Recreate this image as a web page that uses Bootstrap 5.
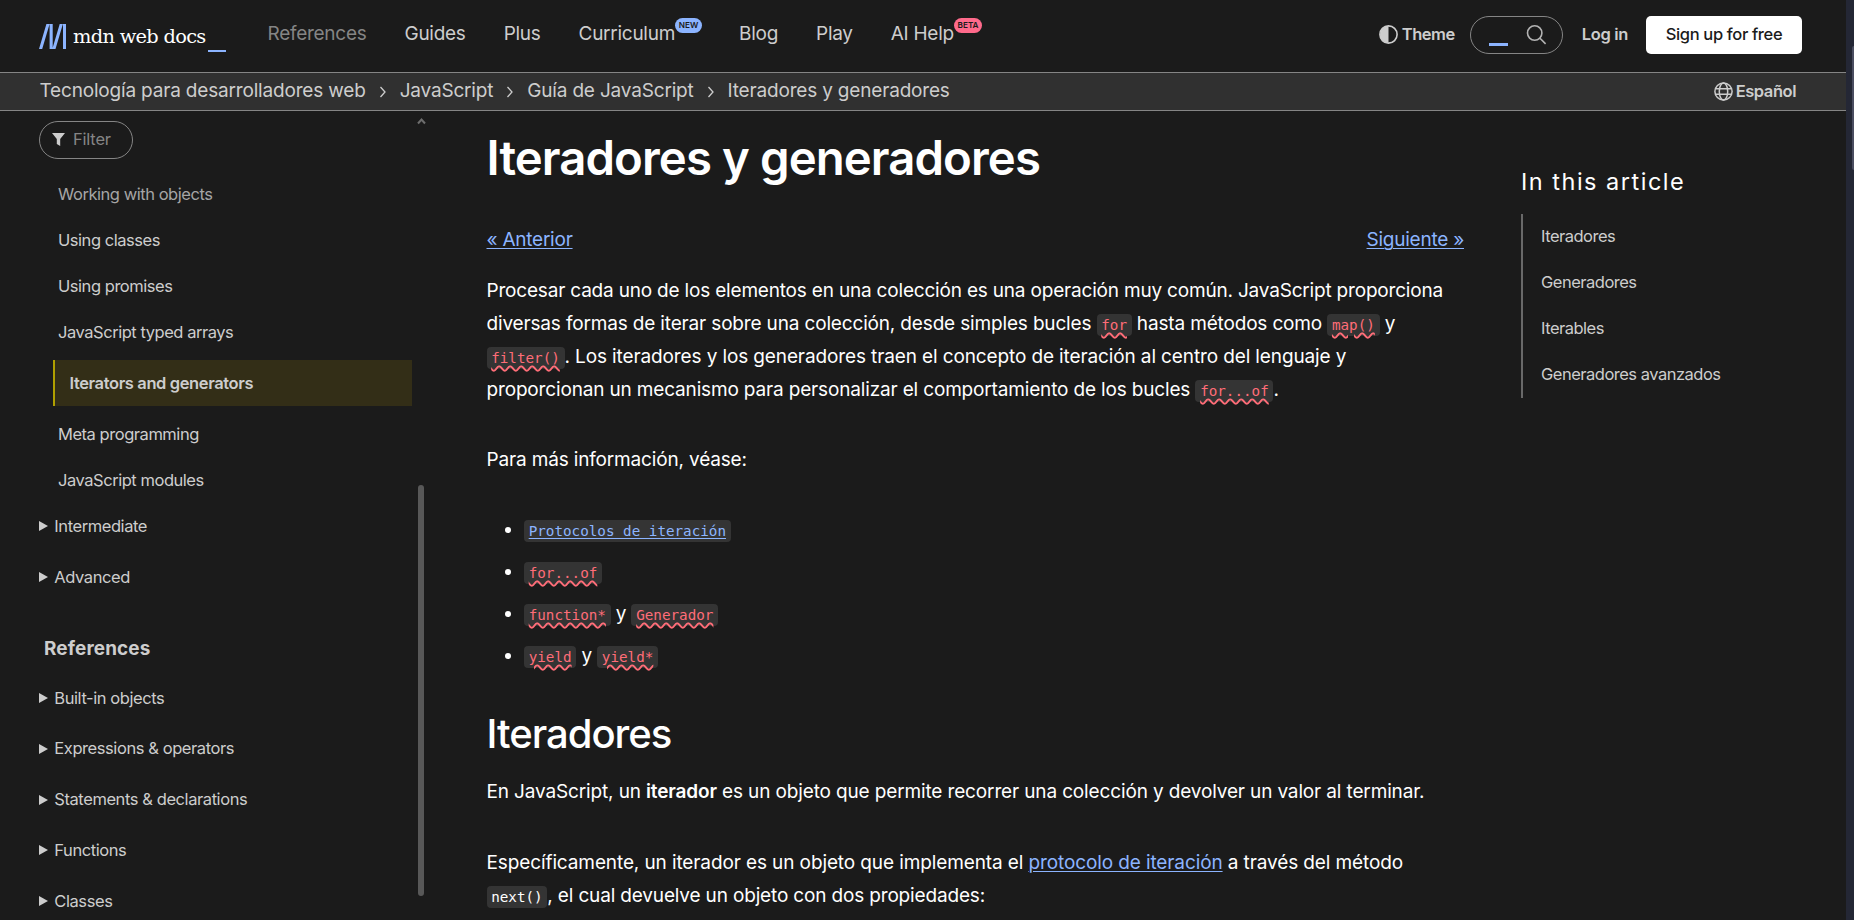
<!DOCTYPE html>
<html lang="es">
<head>
<meta charset="utf-8">
<title>Iteradores y generadores</title>
<link rel="stylesheet" href="https://cdn.jsdelivr.net/npm/bootstrap@5.3.0/dist/css/bootstrap.min.css">
<script src="https://cdn.jsdelivr.net/npm/bootstrap@5.3.0/dist/js/bootstrap.bundle.min.js"></script>
<style>
html,body{height:100%}
body{background:#1b1b1b;color:#fff;font-family:Inter,"Liberation Sans",sans-serif;font-size:19px;overflow:hidden}
a{color:inherit;text-decoration:none}
.page{width:1846px;height:920px}
.topbar{height:72px;padding:0 44px 0 39px;color:#cdcdcd}
.wordmark{font-family:"DejaVu Serif",serif;font-size:19.4px;letter-spacing:-.7px;color:#fff;line-height:1;margin:2px 0 0 7px;width:135px;white-space:nowrap}
.cursor{width:18px;height:2px;background:#8cb4ff;margin-top:29px}
.main-nav{gap:38px;margin-left:41.5px;line-height:24px;padding-bottom:5px;letter-spacing:-.27px}
.tag{font-size:8.2px;font-weight:600;line-height:15px;height:15px;border-radius:8px;color:#1b1b1b;left:100%;top:-4px;letter-spacing:0;padding:0 3.7px}
.tools{font-size:16.5px;font-weight:600;letter-spacing:-.35px}
.search{width:93px;height:38px;border:1px solid #858585;border-radius:19px}
.signup{width:156px;height:38px;border-radius:5px;background:#fff;color:#1b1b1b;font-weight:500;padding-bottom:1px}
.crumbs{height:39px;border-top:1px solid #858585;border-bottom:1px solid #858585;background:#303030;color:#cdcdcd;padding:0 50px 0 39.5px;letter-spacing:-.18px}
.chev{margin:0 14px}
.side{width:425px;padding:10px 0 0 39px;font-size:16.5px;letter-spacing:-.46px;color:#cdcdcd}
.filter{width:94px;height:38px;border:1px solid #858585;border-radius:19px;color:#858585;letter-spacing:-.2px;padding-bottom:1px}
.leaf{height:46px;padding-left:19px}
.current{height:46px;width:359px;margin:5px 0 5px 14px;padding-left:14.5px;border-left:2px solid #b0a000;background:#332e17;font-weight:600;letter-spacing:-.38px}
.fold{height:50.7px;letter-spacing:-.42px}
.fold i{border-left:9px solid #cdcdcd;border-top:5px solid transparent;border-bottom:5px solid transparent;margin-right:6.3px}
.thumb{left:418px;top:485px;width:6px;height:411px;border-radius:3px;background:#585858}
.art{width:977.5px;margin-left:61.5px;letter-spacing:-.16px}
.art h1{font-size:47.3px;font-weight:600;line-height:56px;letter-spacing:-.9px}
.art h2{font-size:40px;font-weight:500;line-height:48px;letter-spacing:-1px}
.art p,.art ul{line-height:33.1px}
.art li{margin-bottom:9px}
.art a{color:#8cb4ff;text-decoration:underline;text-decoration-thickness:1px;text-underline-offset:2px}
.art code{font-family:"DejaVu Sans Mono","Liberation Mono",monospace;font-size:14.25px;line-height:1;letter-spacing:0;color:#fff;background:#343434;border-radius:4px;padding:3px 4.7px}
.art a.miss{color:#ff6d78;text-decoration:underline wavy 1.5px;text-underline-offset:2px}
.art a code{color:inherit}
.toc{margin-left:57px;width:260px;color:#cdcdcd;font-size:16.5px;letter-spacing:-.5px}
.toc h2{font-size:23.5px;font-weight:400;letter-spacing:1.5px;color:#fff;line-height:30px}
.toc ul{border-left:2px solid #696969;padding-left:18px}
.toc li{height:46px;padding-bottom:2px}
.gutter{width:8px;background:#242735}
.gutter div{width:2px;height:124px;background:#4a4d60;margin-top:46px;border-radius:2px 0 0 2px}
</style>
</head>
<body class="d-flex">
<div class="page d-flex flex-column overflow-hidden">
<header class="topbar d-flex align-items-center flex-shrink-0">
  <a href="#" class="d-flex align-items-center">
    <svg width="27" height="25" viewBox="0 0 27 25" fill="#8cb4ff"><path d="M7.4 0h3.2L3.2 25H0zM10.6 0h3.1v25h-3.1zM20.7 0h3.2l-7.4 25h-3.2zM24 0h3v25h-3z"/></svg>
    <span class="wordmark">mdn web docs</span><span class="cursor"></span>
  </a>
  <nav class="main-nav d-flex">
    <a href="#" style="color:#858585">References</a><a href="#">Guides</a><a href="#">Plus</a>
    <a href="#" class="position-relative" style="margin-right:26px">Curriculum<span class="tag position-absolute" style="background:#8cb4ff">NEW</span></a>
    <a href="#">Blog</a><a href="#">Play</a>
    <a href="#" class="position-relative">AI Help<span class="tag position-absolute" style="background:#ff6a8b">BETA</span></a>
  </nav>
  <div class="tools d-flex align-items-center ms-auto" style="margin-bottom:2px">
    <svg style="margin-bottom:1px" width="19" height="19" viewBox="0 0 19 19"><circle cx="9.5" cy="9.5" r="8.6" fill="none" stroke="#cdcdcd" stroke-width="1.6"/><path d="M9.5 1a8.5 8.5 0 0 0 0 17z" fill="#cdcdcd"/></svg>
    <span style="margin-left:4px;padding-bottom:1px;letter-spacing:-.45px">Theme</span>
    <div class="search d-flex" style="margin-left:15px"><svg width="91" height="36" viewBox="0 0 91 36"><path d="M18 26h19v3H18z" fill="#8cb4ff"/><g fill="none" stroke="#b3b3b3" stroke-width="1.6"><circle cx="63.7" cy="16" r="7.2"/><path d="M69 21.3l5.6 5.6"/></g></svg></div>
    <span class="login" style="margin:0 18px 0 19px;padding-bottom:1px">Log in</span>
    <a href="#" class="signup d-flex align-items-center justify-content-center">Sign up for free</a>
  </div>
</header>
<div class="crumbs d-flex align-items-center flex-shrink-0">
  <span>Tecnología para desarrolladores web</span><svg class="chev" width="6" height="12" viewBox="0 0 6 12"><path d="M.5 1l4.5 5-4.5 5" fill="none" stroke="#cdcdcd" stroke-width="1.3"/></svg><span>JavaScript</span><svg class="chev" width="6" height="12" viewBox="0 0 6 12"><path d="M.5 1l4.5 5-4.5 5" fill="none" stroke="#cdcdcd" stroke-width="1.3"/></svg><span>Guía de JavaScript</span><svg class="chev" width="6" height="12" viewBox="0 0 6 12"><path d="M.5 1l4.5 5-4.5 5" fill="none" stroke="#cdcdcd" stroke-width="1.3"/></svg><span>Iteradores y generadores</span>
  <div class="tools ms-auto d-flex align-items-center"><svg width="19" height="19" viewBox="0 0 19 19" fill="none" stroke="#cdcdcd" stroke-width="1.5"><circle cx="9.5" cy="9.5" r="8.6"/><ellipse cx="9.5" cy="9.5" rx="4.2" ry="8.6"/><path d="M1.5 6.8h16M1.5 12.2h16"/></svg><span style="margin-left:3px;letter-spacing:-.45px">Español</span></div>
</div>
<div class="d-flex flex-grow-1">
  <aside class="side flex-shrink-0">
    <div class="filter d-flex align-items-center"><svg style="margin-left:12px" width="13" height="14" viewBox="0 0 13 14"><path d="M0 0h13L8.2 6v7L4.8 11V6z" fill="#cdcdcd"/></svg><span style="margin-left:8px">Filter</span></div>
    <div style="height:12px"></div>
    <div class="leaf d-flex align-items-center" style="color:#a5a5a5">Working with objects</div>
    <div class="leaf d-flex align-items-center">Using classes</div>
    <div class="leaf d-flex align-items-center">Using promises</div>
    <div class="leaf d-flex align-items-center">JavaScript typed arrays</div>
    <div class="current d-flex align-items-center">Iterators and generators</div>
    <div class="leaf d-flex align-items-center">Meta programming</div>
    <div class="leaf d-flex align-items-center">JavaScript modules</div>
    <div class="fold d-flex align-items-center" style="margin-top:-2px"><i></i>Intermediate</div>
    <div class="fold d-flex align-items-center"><i></i>Advanced</div>
    <div class="d-flex align-items-center" style="height:92px;padding:1px 0 0 5px;font-size:18.9px;font-weight:700;letter-spacing:.15px">References</div>
    <div style="margin-top:-21.6px"></div>
    <div class="fold d-flex align-items-center"><i></i>Built-in objects</div>
    <div class="fold d-flex align-items-center"><i></i>Expressions &amp; operators</div>
    <div class="fold d-flex align-items-center"><i></i>Statements &amp; declarations</div>
    <div class="fold d-flex align-items-center"><i></i>Functions</div>
    <div class="fold d-flex align-items-center"><i></i>Classes</div>
    <svg class="position-absolute" style="left:417px;top:117px" width="9" height="8" viewBox="0 0 9 8"><path d="M1 6.5l3.5-4 3.5 4" fill="none" stroke="#6d6d6d" stroke-width="2"/></svg>
    <div class="thumb position-absolute"></div>
  </aside>
  <main class="art flex-shrink-0">
    <h1 style="margin:19px 0 37px">Iteradores y generadores</h1>
    <div class="d-flex justify-content-between" style="line-height:33px;letter-spacing:-.24px"><a href="#">« Anterior</a><a href="#">Siguiente »</a></div>
    <p style="margin:18px 0 36.5px"><span style="letter-spacing:-.19px">Procesar cada uno de los elementos en una colección es una operación muy común. JavaScript proporciona</span><br>diversas formas de iterar sobre una colección, desde simples bucles <a href="#" class="miss"><code>for</code></a> hasta métodos como <a href="#" class="miss"><code>map()</code></a> y<br><a href="#" class="miss"><code>filter()</code></a><span style="letter-spacing:-.12px">. Los iteradores y los generadores traen el concepto de iteración al centro del lenguaje y</span><br>proporcionan un mecanismo para personalizar el comportamiento de los bucles <a href="#" class="miss"><code>for...of</code></a>.</p>
    <p style="margin-bottom:37px">Para más información, véase:</p>
    <ul style="padding-left:37.5px;margin-bottom:37.3px">
      <li><a href="#"><code>Protocolos de iteración</code></a></li>
      <li><a href="#" class="miss"><code>for...of</code></a></li>
      <li><a href="#" class="miss"><code>function*</code></a> y <a href="#" class="miss"><code>Generador</code></a></li>
      <li><a href="#" class="miss"><code>yield</code></a> y <a href="#" class="miss"><code>yield*</code></a></li>
    </ul>
    <h2 style="margin-bottom:17px">Iteradores</h2>
    <p style="margin-bottom:37.9px;letter-spacing:-.14px">En JavaScript, un <strong style="font-weight:600">iterador</strong> es un objeto que permite recorrer una colección y devolver un valor al terminar.</p>
    <p><span style="letter-spacing:-.11px">Específicamente, un iterador es un objeto que implementa el <a href="#">protocolo de iteración</a> a través del método</span><br><code>next()</code>, el cual devuelve un objeto con dos propiedades:</p>
  </main>
  <aside class="toc">
    <h2 style="margin:56px 0 17px">In this article</h2>
    <ul class="list-unstyled">
      <li class="d-flex align-items-center">Iteradores</li><li class="d-flex align-items-center">Generadores</li><li class="d-flex align-items-center">Iterables</li><li class="d-flex align-items-center">Generadores avanzados</li>
    </ul>
  </aside>
</div>
</div>
<div class="gutter d-flex justify-content-end flex-shrink-0"><div></div></div>
</body>
</html>
